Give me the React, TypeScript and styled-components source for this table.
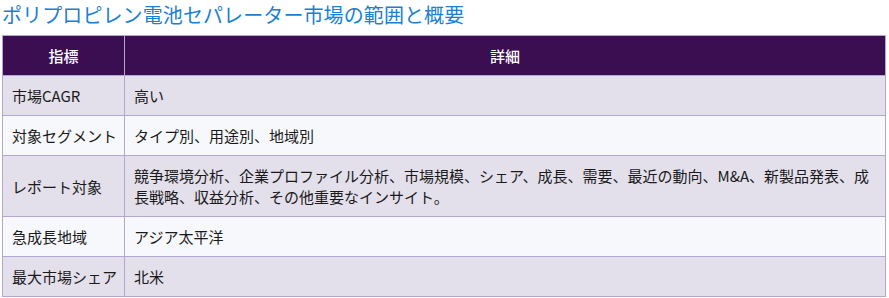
import { FC } from 'react';
import styled, { createGlobalStyle } from 'styled-components';

const GlobalStyle = createGlobalStyle`
  html, body {
    margin: 0;
    padding: 0;
    background: #ffffff;
  }

  body {
    font-family: 'Noto Sans CJK JP', 'Noto Sans', sans-serif;
  }
`;

interface IRow {
  label: string;
  detail: string;
}

const rows: IRow[] = [
  { label: '市場CAGR', detail: '高い' },
  { label: '対象セグメント', detail: 'タイプ別、用途別、地域別' },
  {
    label: 'レポート対象',
    detail:
      '競争環境分析、企業プロファイル分析、市場規模、シェア、成長、需要、最近の動向、M&A、新製品発表、成長戦略、収益分析、その他重要なインサイト。',
  },
  { label: '急成長地域', detail: 'アジア太平洋' },
  { label: '最大市場シェア', detail: '北米' },
];

const Page = styled.div`
  padding: 0 3px 0 2px;
`;

const Title = styled.h2`
  margin: 0 0 6px;
  font-size: 20px;
  line-height: 29px;
  font-weight: 400;
  color: #1b7fd2;
  letter-spacing: 0.1px;
`;

const Table = styled.table`
  width: 884px;
  table-layout: fixed;
  border-collapse: collapse;
  font-size: 15px;
  line-height: 21px;
  color: #1a1a1a;
`;

const Column = styled.col<{ $width?: number }>`
  width: ${({ $width }) => ($width ? `${$width}px` : 'auto')};
`;

const HeadCell = styled.th`
  height: 39px;
  padding: 0;
  background: #3a0e50;
  color: #ffffff;
  font-weight: 500;
  text-align: center;
  border: 1px solid #b3a6d1;
`;

const Row = styled.tr<{ $odd: boolean }>`
  background: ${({ $odd }) => ($odd ? '#e3dfeb' : '#f7f8fb')};
`;

const Cell = styled.td`
  padding: 9px 4px 9px 9px;
  border: 1px solid #b3a6d1;
  vertical-align: middle;
  text-align: left;
  white-space: normal;
`;

const App: FC = () => (
  <Page>
    <GlobalStyle />
    <Title>ポリプロピレン電池セパレーター市場の範囲と概要</Title>
    <Table>
      <colgroup>
        <Column $width={122} />
        <Column />
      </colgroup>
      <thead>
        <tr>
          <HeadCell>指標</HeadCell>
          <HeadCell>詳細</HeadCell>
        </tr>
      </thead>
      <tbody>
        {rows.map(({ label, detail }, i) => (
          <Row key={label} $odd={i % 2 === 0}>
            <Cell>{label}</Cell>
            <Cell>{detail}</Cell>
          </Row>
        ))}
      </tbody>
    </Table>
  </Page>
);

export default App;
